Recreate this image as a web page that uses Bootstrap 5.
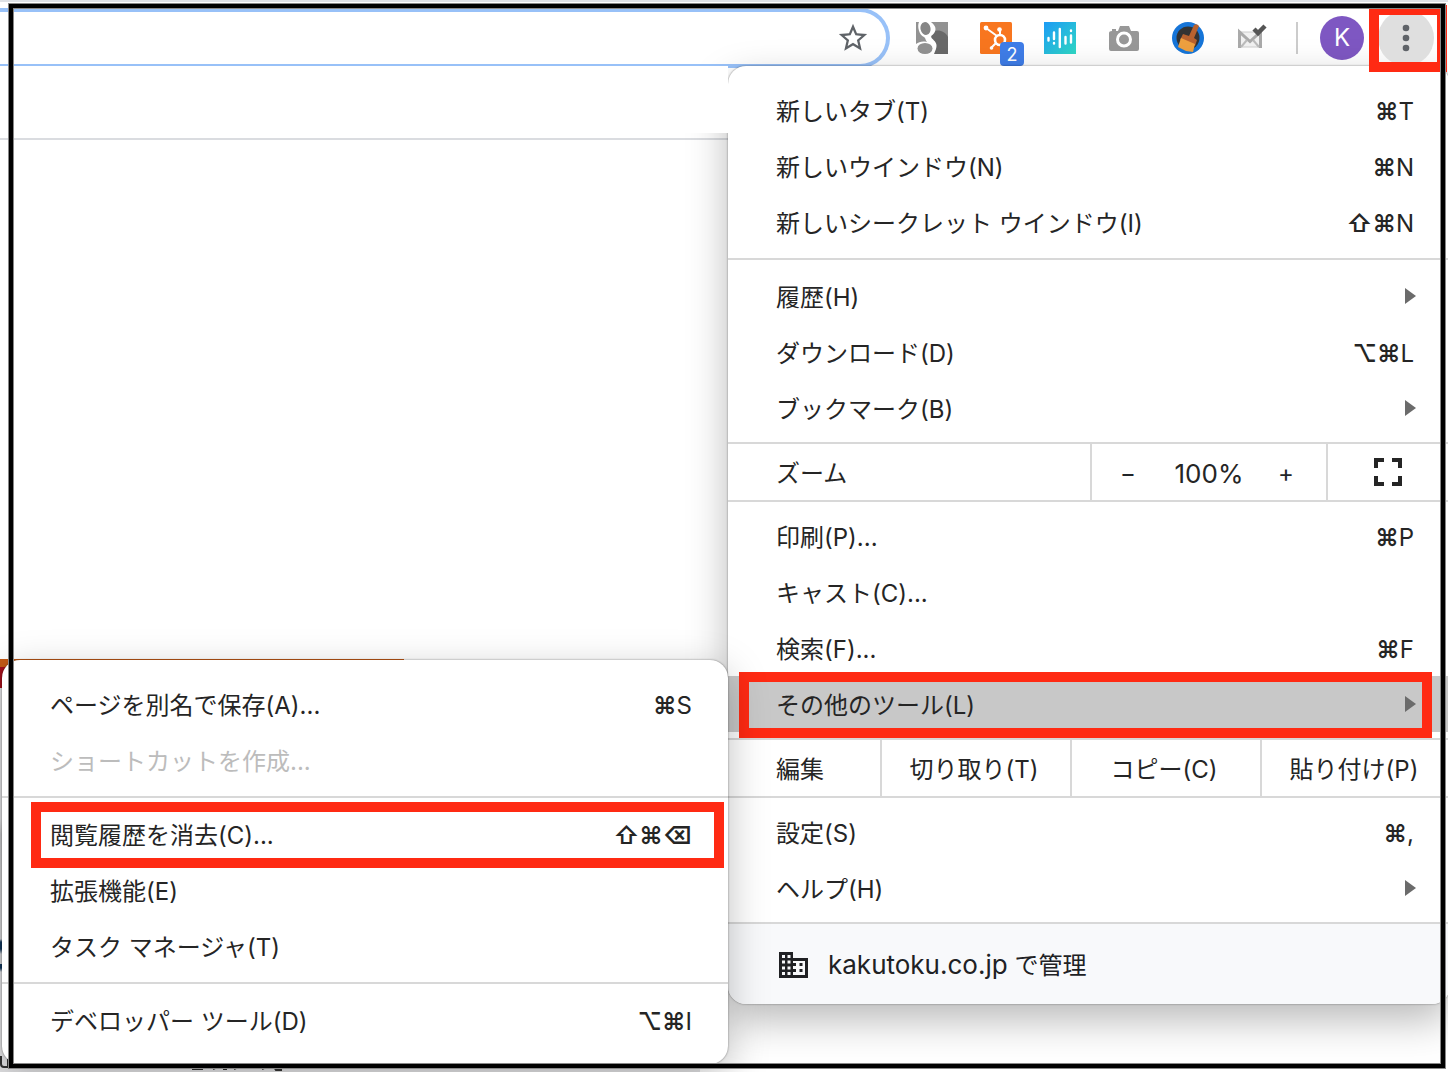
<!DOCTYPE html>
<html lang="ja">
<head>
<meta charset="utf-8">
<meta name="viewport" content="width=device-width, initial-scale=1">
<title>Chrome メニュー</title>
<link href="https://cdn.jsdelivr.net/npm/bootstrap@5.3.0/dist/css/bootstrap.min.css" rel="stylesheet">
<style>
  body { font-family: Inter, "Noto Sans CJK JP", sans-serif; font-size: 24px; line-height: 32px; color: #252525; background: #fff; }
  .browser { min-height: 100vh; }
  button { color: inherit; }
  .latin { font-size: 26px; }

  /* toolbar */
  .tabstrip { height: 2px; background: #dee1e6; }
  .toolbar { height: 64px; padding: 6px 14px 0 0; }
  .omnibox { height: 60px; border: 4px solid #98c1f8; border-left: 0; border-radius: 0 30px 30px 0; padding-right: 16px; margin-right: 26px; }
  .omnibox input { background: transparent; outline: 0; }
  .toolbar svg { display: block; }
  .tools { height: 60px; }
  .ext-row { gap: 32px; margin-right: 28px; }
  .count { left: 20px; top: 20px; width: 24px; height: 24px; line-height: 26px; font-size: 18px; border-radius: 4px; background: #3f7de8; }
  .rule-v { width: 2px; height: 32px; background: #ccc; margin-right: 22px; }
  .avatar { width: 44px; height: 44px; background: #7e57c2; color: #fff; margin-right: 14px; font-size: 24px; }
  .kebab { width: 56px; height: 56px; background: #dfdfdf; border-radius: 50%; }
  .kebab-mark { left: -9px; right: -13px; top: -5px; bottom: -6px; }
  .bookmarks { height: 67px; background: #fff; width: calc(100% - 720px); z-index: 3; }
  .page-rule { height: 2px; background: #dadce0; margin-top: 5px; }

  /* strip of the page that stays visible behind the submenu */
  .page-behind { left: 0; top: 659px; bottom: 0; width: 700px; overflow: hidden;
    background: linear-gradient(90deg, transparent 404px, #fff 404px) 0 0 / 100% 24px no-repeat, linear-gradient(#c35a16 0 8px, #a3101c 8px 29px, #e4e4e6 29px 160px, #c9c9cb 175px, #d8d8da 280px, #12395f 283px 290px, #d8d8da 295px 305px, #12395f 305px 309px, #e4e4e6 313px); }
  .page-blank { left: 0; top: 140px; width: 434px; height: 519px; background: #fff; }
  .page-behind svg { left: 0; bottom: 0; }

  /* menus */
  .sheet { background: #fff; border-radius: 18px; }
  .sheet-main { top: 66px; right: -2px; width: 722px; z-index: 2; box-shadow: 0 0 2px rgba(0,0,0,.5), 0 16px 40px rgba(0,0,0,.28); }
  .sheet-sub { top: 660px; right: 720px; width: 726px; z-index: 4; box-shadow: 0 0 2px rgba(0,0,0,.5), 0 12px 40px rgba(0,0,0,.26); }
  .group { margin: 0; padding: 6px 0; list-style: none; border-bottom: 2px solid #d8d8d8; }
  .group-lg { padding: 8px 0; }
  .group-first { padding-top: 16px; }
  .group-last { padding-bottom: 16px; border-bottom: 0; }
  .entry { height: 56px; padding: 4px 36px 0 48px; display: flex; align-items: center; justify-content: space-between; color: #252525; }
  .entry:disabled { color: #bcbcbc; }
  .entry.chosen, .entry.chosen:hover { background: #c8c8c8; }
  .arrow { width: 0; height: 0; margin: 0 -2px 4px 0; border-left: 11px solid #6b6b6b; border-top: 8px solid transparent; border-bottom: 8px solid transparent; }
  kbd.keys { font: inherit; color: inherit; background: none; padding: 0; }
  kbd.keys b { font-weight: 600; }
  .strip { height: 58px; border-bottom: 2px solid #d8d8d8; }
  .strip-label { padding: 4px 0 0 48px; }
  .cell { border-left: 2px solid #d8d8d8; width: 190px; }
  .edit-cell { padding: 4px 4px 0 0; }
  .zoom-cell { width: 236px; padding: 4px 32px 0 28px; }
  .step { width: 16px; font-size: 24px; line-height: 32px; }
  .zoom-value { padding-left: 4px; }
  .full-cell { width: 124px; padding: 0 2px 0 0; }
  .managed { height: 80px; background: #f8f9fb; padding: 2px 48px 0 50px; gap: 19px; border-radius: 0 0 18px 18px; color: #202124; }

  /* annotations */
  .mark-red { border: 10px solid #ff2a13; pointer-events: none; }
  .mark-tools { left: 11px; right: 18px; top: -4px; bottom: -6px; }
  .mark-clear { left: 29px; right: 4px; top: -4px; bottom: -6px; }
  .frame { inset: 4px 3px 4px 9px; z-index: 9; border: 4px solid #000; box-shadow: 0 0 0 1px #888, inset 0 0 0 1px #888; pointer-events: none; }
</style>
</head>
<body>
<div class="browser position-relative overflow-hidden">
  <div class="tabstrip"></div>
  <header class="toolbar d-flex align-items-start">
    <div class="omnibox flex-grow-1 d-flex align-items-center">
      <input type="text" class="border-0 flex-grow-1" aria-label="アドレスバー">
      <button class="btn p-0 border-0" aria-label="ブックマークに追加">
        <svg width="34" height="34" viewBox="0 0 24 24" fill="#5f6368"><path d="M22 9.24l-7.19-.62L12 2 9.19 8.63 2 9.24l5.46 4.73L5.82 21 12 17.27 18.18 21l-1.63-7.03L22 9.24zM12 15.4l-3.76 2.27 1-4.28-3.32-2.88 4.38-.38L12 6.1l1.71 4.04 4.38.38-3.32 2.88 1 4.28L12 15.4z"/></svg>
      </button>
    </div>
    <div class="tools d-flex align-items-center">
      <div class="ext-row d-flex align-items-center">
        <button class="btn p-0 border-0" aria-label="Google">
          <svg width="32" height="32" viewBox="0 0 32 32"><rect width="32" height="32" fill="#929292"/><path d="M16 10C22 7 29 9 32 15V32H15Z" fill="#696969"/><path d="M0 0H15C22 5 20 11 15 14C14 17 23 19 20 27L18 32H0Z" fill="#fff"/><path d="M0 0H3C1 4 3 13 8 15C10 16 9 18 11 20C6 19 3 20 0 22Z" fill="#929292"/><ellipse cx="9.500" cy="6.500" rx="5" ry="6.500" transform="rotate(-12 9.500 6.500)" fill="#858585"/><ellipse cx="9" cy="26.500" rx="7.500" ry="5.500" fill="#929292"/></svg>
        </button>
        <button class="btn p-0 border-0 position-relative" aria-label="HubSpot">
          <svg width="32" height="32" viewBox="0 0 32 32"><rect width="32" height="32" rx="1.500" fill="#f8761f"/><g stroke="#fff" stroke-width="2" fill="none"><path d="M6 6L17 14M20 8V14M16 21L11 26"/><circle cx="20" cy="18" r="5" stroke-width="2.600"/></g><g fill="#fff"><circle cx="6" cy="6" r="2.400"/><circle cx="19.500" cy="7.500" r="2.300"/><circle cx="11.500" cy="26" r="1.800"/></g></svg>
          <span class="count position-absolute text-white text-center">2</span>
        </button>
        <button class="btn p-0 border-0" aria-label="音声">
          <svg width="32" height="32" viewBox="0 0 32 32"><defs><linearGradient id="aqua" x1="0" y1="0" x2="1" y2="1"><stop stop-color="#1c9bf5"/><stop offset="1" stop-color="#2fd8c4"/></linearGradient></defs><rect width="32" height="32" fill="url(#aqua)"/><g stroke="#fff" stroke-width="2.400" stroke-linecap="round"><path d="M4.500 16V18.500M10 10.500V17M10 21V21.500M15.800 7V25M21.500 15V21.500M27 13.500V20.500M27 8.500V9"/></g></svg>
        </button>
        <button class="btn p-0 border-0" aria-label="カメラ">
          <svg width="32" height="32" viewBox="0 0 32 32"><path d="M4 7h4v2h2l2-5h9l2 5h6q2 0 2 2v16q0 2-2 2H3q-2 0-2-2V11q0-2 3-2z" fill="#989898"/><circle cx="16" cy="17.500" r="6.500" fill="#989898" stroke="#fff" stroke-width="3"/></svg>
        </button>
        <button class="btn p-0 border-0" aria-label="クリーナー">
          <svg width="32" height="32" viewBox="0 0 32 32"><circle cx="16" cy="16" r="16" fill="#1675d8"/><circle cx="16" cy="16" r="11.500" fill="#333"/><path d="M22 3Q25 1 27 4L22 16L25 18L23 24L8 18L11 12L17 14Z" fill="#b8622f"/><path d="M9 16L23 22L21 30L14 29L6 25Z" fill="#eea03f"/></svg>
        </button>
        <button class="btn p-0 border-0" aria-label="メール">
          <svg width="32" height="32" viewBox="0 0 32 32"><path d="M2.500 10H25V25H2.500Z" fill="#f1f1f1" stroke="#ccc"/><path d="M3.500 26V10L14 19.500L24.500 10V26" fill="none" stroke="#aaa" stroke-width="3"/><path d="M5 25L11 18M23 25L17 18" stroke="#bbb" stroke-width="2"/><path d="M18 7L22 11L29 4" fill="none" stroke="#555" stroke-width="4.500"/></svg>
        </button>
      </div>
      <div class="rule-v"></div>
      <button class="avatar btn rounded-circle border-0 p-0" aria-label="プロフィール">K</button>
      <div class="position-relative z-3">
        <button class="kebab btn border-0 p-0 d-flex align-items-center justify-content-center" aria-label="メニュー">
          <svg width="8" height="28" viewBox="0 0 8 28" fill="#5f6368"><circle cx="4" cy="4" r="3.300"/><circle cx="4" cy="14" r="3.300"/><circle cx="4" cy="24" r="3.300"/></svg>
        </button>
        <div class="kebab-mark mark-red position-absolute"></div>
      </div>
    </div>
  </header>
  <div class="bookmarks position-relative"></div>
  <div class="page-rule"></div>
  <div class="page-behind position-absolute">
    <svg class="position-absolute" width="404" height="20" viewBox="0 0 404 20" fill="none" stroke="#333" stroke-width="2"><path d="M1 4V12Q1 15 4 15H8V4M192 17H203M213 17L217 15M223 17H227M234 17L238 15M262 17L266 15M274 15L276 18H282"/></svg>
  </div>
  <div class="page-blank position-absolute z-3"></div>

  <nav class="sheet sheet-main position-absolute" aria-label="Chrome メニュー">
    <ul class="group group-lg group-first">
      <li><button class="entry dropdown-item"><span>新しいタブ(T)</span><kbd class="keys"><b>⌘</b>T</kbd></button></li>
      <li><button class="entry dropdown-item"><span>新しいウインドウ(N)</span><kbd class="keys"><b>⌘</b>N</kbd></button></li>
      <li><button class="entry dropdown-item"><span>新しいシークレット ウインドウ(I)</span><kbd class="keys"><b>⇧⌘</b>N</kbd></button></li>
    </ul>
    <ul class="group pt-2">
      <li><button class="entry dropdown-item"><span>履歴(H)</span><i class="arrow"></i></button></li>
      <li><button class="entry dropdown-item"><span>ダウンロード(D)</span><kbd class="keys"><b>⌥⌘</b>L</kbd></button></li>
      <li><button class="entry dropdown-item"><span>ブックマーク(B)</span><i class="arrow"></i></button></li>
    </ul>
    <div class="strip d-flex align-items-stretch">
      <div class="strip-label flex-grow-1 d-flex align-items-center">ズーム</div>
      <div class="cell zoom-cell d-flex align-items-center">
        <button class="step btn border-0 p-0" aria-label="縮小">−</button>
        <span class="zoom-value latin flex-grow-1 text-center">100%</span>
        <button class="step btn border-0 p-0" aria-label="拡大">+</button>
      </div>
      <button class="cell full-cell bg-transparent border-top-0 border-end-0 border-bottom-0 d-flex align-items-center justify-content-center" aria-label="全画面表示">
        <svg width="28" height="28" viewBox="0 0 28 28" fill="none" stroke="#252525" stroke-width="4"><path d="M2 10V2H10M18 2H26V10M26 18V26H18M10 26H2V18"/></svg>
      </button>
    </div>
    <ul class="group">
      <li><button class="entry dropdown-item"><span>印刷(P)...</span><kbd class="keys"><b>⌘</b>P</kbd></button></li>
      <li><button class="entry dropdown-item"><span>キャスト(C)...</span></button></li>
      <li><button class="entry dropdown-item"><span>検索(F)...</span><kbd class="keys"><b>⌘</b>F</kbd></button></li>
      <li class="position-relative"><button class="entry dropdown-item chosen"><span>その他のツール(L)</span><i class="arrow"></i></button><div class="mark-red mark-tools position-absolute"></div></li>
    </ul>
    <div class="strip d-flex align-items-stretch">
      <div class="strip-label flex-grow-1 d-flex align-items-center">編集</div>
      <button class="cell edit-cell bg-transparent border-top-0 border-end-0 border-bottom-0">切り取り(T)</button>
      <button class="cell edit-cell bg-transparent border-top-0 border-end-0 border-bottom-0">コピー(C)</button>
      <button class="cell edit-cell bg-transparent border-top-0 border-end-0 border-bottom-0">貼り付け(P)</button>
    </div>
    <ul class="group">
      <li><button class="entry dropdown-item"><span>設定(S)</span><kbd class="keys"><b>⌘</b>,</kbd></button></li>
      <li><button class="entry dropdown-item"><span>ヘルプ(H)</span><i class="arrow"></i></button></li>
    </ul>
    <a href="#" class="managed d-flex align-items-center text-decoration-none">
      <svg width="31" height="28" viewBox="0 0 31 28"><path d="M1 1H15V7H30V27H1Z" fill="#202124"/><path d="M15 10H27V24H15Z" fill="#f8f9fb"/><path d="M4 4h3v3H4zM9.500 4h3v3h-3zM4 9.500h3v3H4zM9.500 9.500h3v3h-3zM4 15.500h3v3H4zM9.500 15.500h3v3h-3zM4 21h3v3H4zM9.500 21h3v3h-3z" fill="#f8f9fb"/><path d="M15 12h3v3h-3zM15 18h3v3h-3zM21.500 12h3v3h-3zM21.500 18h3v3h-3z" fill="#202124"/></svg>
      <span><span class="latin">kakutoku.co.jp</span> で管理</span>
    </a>
  </nav>

  <nav class="sheet sheet-sub position-absolute" aria-label="その他のツール">
    <ul class="group group-lg group-first">
      <li><button class="entry dropdown-item"><span>ページを別名で保存(A)...</span><kbd class="keys"><b>⌘</b>S</kbd></button></li>
      <li><button class="entry dropdown-item" disabled><span>ショートカットを作成...</span></button></li>
    </ul>
    <ul class="group group-lg">
      <li class="position-relative"><button class="entry dropdown-item"><span>閲覧履歴を消去(C)...</span><kbd class="keys"><b>⇧⌘⌫</b></kbd></button><div class="mark-red mark-clear position-absolute"></div></li>
      <li><button class="entry dropdown-item"><span>拡張機能(E)</span></button></li>
      <li><button class="entry dropdown-item"><span>タスク マネージャ(T)</span></button></li>
    </ul>
    <ul class="group group-lg group-last">
      <li><button class="entry dropdown-item"><span>デベロッパー ツール(D)</span><kbd class="keys"><b>⌥⌘</b>I</kbd></button></li>
    </ul>
  </nav>

  <div class="frame position-absolute"></div>
</div>
<script src="https://cdn.jsdelivr.net/npm/bootstrap@5.3.0/dist/js/bootstrap.bundle.min.js"></script>
</body>
</html>
